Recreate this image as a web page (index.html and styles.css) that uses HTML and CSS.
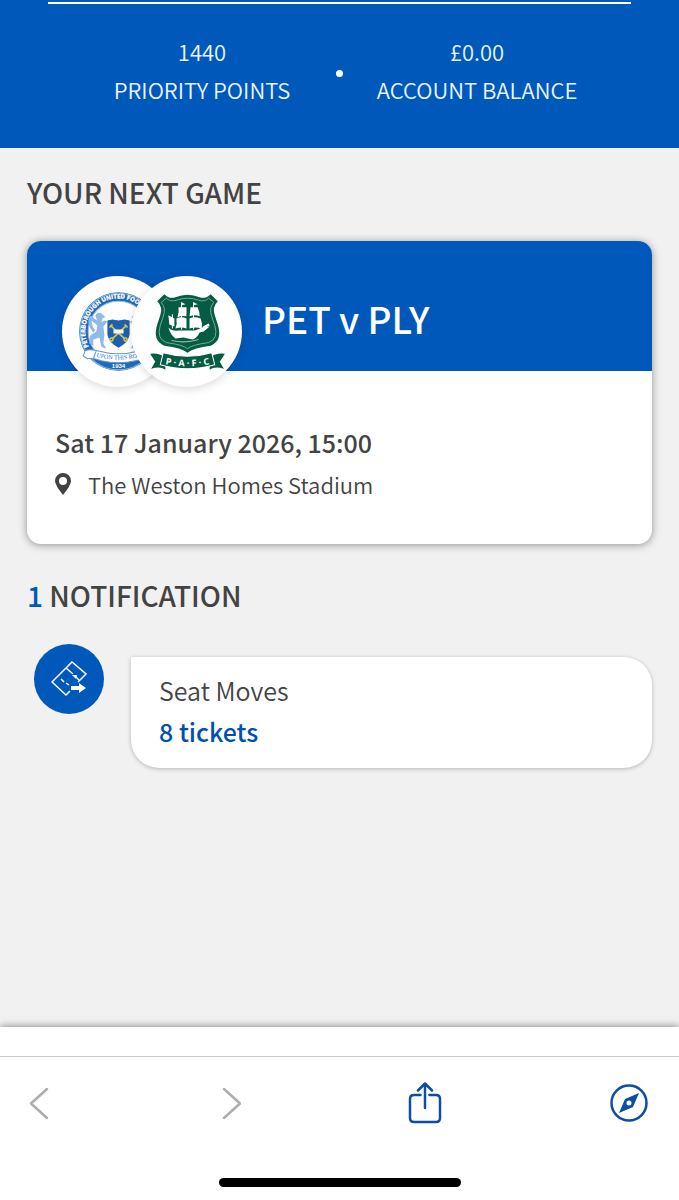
FILE: index.html
```html
<!DOCTYPE html>
<html lang="en">

<head>
<meta charset="UTF-8" />
<meta name="viewport" content="width=device-width, initial-scale=1.0" />
<title>My Account</title>
<link rel="stylesheet" href="styles.css">
</head>

<body>
<header class="account">
<div class="stats">
<div class="stat">
<span>1440</span>
<span>PRIORITY POINTS</span>
</div>
<span class="dot"></span>
<div class="stat">
<span>£0.00</span>
<span>ACCOUNT BALANCE</span>
</div>
</div>
</header>

<main class="content">
<h2 class="title">YOUR NEXT GAME</h2>

<section class="game">
<div class="game-head">
<div class="crests">
<div class="crest">
<svg viewBox="0 0 110 110" role="img" aria-label="Peterborough United">
<defs>
<path id="ring" d="M26.500 70 A33 33 0 1 1 85.500 70" />
</defs>
<circle cx="56" cy="55" r="39" fill="#1f6bb8" />
<circle cx="56" cy="55" r="38" fill="none" stroke="#8fb8e0" stroke-width="1" />
<circle cx="56" cy="55" r="30" fill="#fff" stroke="#9cc3e8" stroke-width="1" />
<text class="ring-text"><textPath href="#ring">PETERBOROUGH UNITED FOOTBALL</textPath></text>
<!-- lions -->
<g fill="#8fbbe6">
<path id="lion" d="M39 37 q-5 -2 -6 3 l2 4 l-5 -3 l-2 2 l7 6 l-1 6 l-6 4 l-1 8 l4 2 l0 -6 l6 -2 l2 9 l5 2 l-3 -5 l1 -9 l-1 -8 l4 -5 l-3 -1 l-3 2 l1 -4 l3 -1z" />
<path d="M31 56 q-7 -8 -4 -15 q2 -3 4 0 q-4 5 2 13z" />
<use href="#lion" transform="translate(112 0) scale(-1 1)" />
</g>
<!-- shield and keys -->
<path d="M45 44 l5 -1 l6 1 l6 -1 l5 1 v14 q-1 8 -11 13 q-10 -5 -11 -13z" fill="#1e5fae" />
<g fill="none" stroke="#d9c64a" stroke-width="1.600">
<path d="M48 49 L62 62 M64 49 L50 62" />
<circle cx="49" cy="63" r="1.500" />
<circle cx="63" cy="63" r="1.500" />
<path d="M47 51 l3 -3 M65 51 l-3 -3" />
</g>
<path d="M51 53 h10 v4 h-10z" fill="#f4f4e6" />
<!-- ribbon -->
<path d="M23 74 q4 -2 12 0 q21 6 42 0 q8 -3 12 0 l-3 8 q-7 1 -13 2 q-17 4 -34 0 q-8 -3 -14 -2 l-4 -3z" fill="#fff" stroke="#5b98d4" stroke-width="1" />
<path d="M34 74 l-3 8 M78 74 l3 8" stroke="#5b98d4" />
<path id="motto" d="M34 80 Q56 86 82 79" fill="none" />
<text class="motto-text"><textPath href="#motto">UPON THIS ROCK</textPath></text>
<text x="56" y="91" class="year-text">1934</text>
</svg>
</div>
<div class="crest">
<svg viewBox="0 0 110 110" role="img" aria-label="Plymouth Argyle">
<path d="M33 18 Q38 23 44 21 Q56 16 68 21 Q74 23 79 18 L86 25 Q80 31 83 39 L86 48 Q91 64 79 69 Q62 71 56 76 Q50 71 33 69 Q21 64 26 48 L29 39 Q32 31 26 25z" fill="#045c43" />
<path d="M35 22 Q39 26 45 24 Q56 20 67 24 Q73 26 77 22 L82 26 Q77 32 80 40 L83 49 Q87 62 77 66 Q61 68 56 72 Q51 68 35 66 Q25 62 29 49 L32 40 Q35 32 30 26z" fill="none" stroke="#8ebcab" stroke-width="0.800" />
<!-- ship -->
<g fill="#fff">
<path d="M37 51 q4 4 10 3 l16 0 q4 -1 7 -3 l8 -1 l-6 5 l-4 1 q-3 6 -7 7 l-9 -2 l-8 1 q-5 -4 -7 -11z" />
<path d="M47 31 l8 0 l0 9 q-5 -1 -9 1 q2 -5 1 -10z" />
<path d="M59 31 l7 0 q2 4 2 9 q-5 -2 -10 0z" />
<path d="M45 42 q5 -2 10 0 l0 10 q-5 -2 -11 0 q2 -5 1 -10z" />
<path d="M58 42 q5 -2 11 0 q2 5 1 10 q-6 -2 -12 0z" />
<path d="M37 39 l6 3 l0 8 l-5 -2z M71 50 l6 -3 l1 2 l-6 3z" />
<path d="M50 26 l4 2 l-4 1z M62 26 l4 2 l-4 1z" />
</g>
<path d="M50 26 V53 M62 26 V53 M41 38 V52" stroke="#fff" fill="none" stroke-width="1" />
<path d="M40 64 q15 3 27 -1" stroke="#8ebcab" fill="none" stroke-width="1" />
<!-- scroll -->
<path d="M19 77 q9 -1 15 4 l0 12 q-5 -4 -14 -1 l4 -7z M93 77 q-9 -1 -15 4 l0 12 q5 -4 14 -1 l-4 -7z" fill="#045c43" />
<path d="M32 76 Q56 83 80 76 L83 88 Q56 96 29 88z" fill="#045c43" stroke="#fff" stroke-width="1" />
<path id="scroll" d="M28 86 Q56 93 84 86" fill="none" />
<text class="scroll-text"><textPath href="#scroll" startOffset="50%">P · A · F · C</textPath></text>
</svg>
</div>
</div>
<h3 class="teams">PET v PLY</h3>
</div>
<div class="game-info">
<p class="date">Sat 17 January 2026, 15:00</p>
<p class="venue">
<svg class="pin" viewBox="0 0 16 22" aria-hidden="true"><path fill-rule="evenodd" d="M8 0 A8 8 0 0 0 0 8 Q0 12 8 22 Q16 12 16 8 A8 8 0 0 0 8 0z M8 4 a4 4 0 1 1 0 8 a4 4 0 1 1 0 -8z" fill="#434343" /></svg>
The Weston Homes Stadium
</p>
</div>
</section>

<h2 class="title"><span class="count">1</span> NOTIFICATION</h2>

<a href="#" class="notice">
<span class="notice-icon">
<svg viewBox="0 0 36 36" fill="none" stroke="#fff" stroke-width="1.500">
<path d="M19 30 L15 34 L1 21 L21 1 L35 13 L27 21" />
<path d="M15 7 L22 13 M24 15 L28 19" />
<path d="M10 18 L13 21 M15 22 L18 24" />
<path d="M21 14 l5 0 l-1 4z" fill="#fff" stroke="none" />
<path d="M20 25 h8 v-3 l7 5 l-7 5 v-3 h-8z" fill="#fff" stroke="none" />
</svg>
</span>
<span class="bubble">
<span>Seat Moves</span>
<strong class="tickets">8 tickets</strong>
</span>
</a>
</main>

<div class="sheet"></div>

<footer class="browser">
<nav class="toolbar">
<button aria-label="Back" disabled><svg width="20" height="42" viewBox="0 0 20 42"><path d="M18 7 L2 21.500 L18 36" /></svg></button>
<button aria-label="Forward" disabled><svg width="24" height="42" viewBox="0 0 24 42"><path d="M7 7 L23 21.500 L7 36" /></svg></button>
<button aria-label="Share"><svg width="34" height="42" viewBox="0 0 34 42"><path d="M12.500 13 H6 Q2 13 2 17 V36 Q2 40 6 40 H28 Q32 40 32 36 V17 Q32 13 28 13 H21.500 M17 26 V2 M10 8.500 L17 1.500 L24 8.500" /></svg></button>
<button aria-label="Open in browser"><svg width="38" height="42" viewBox="0 0 38 42"><circle cx="19" cy="21" r="17.500" /><path class="needle" fill-rule="evenodd" d="M29 11 L23 25 L9 31 L15 17z M19 18.500 a2.500 2.500 0 1 0 0 5 a2.500 2.500 0 1 0 0 -5z" /></svg></button>
</nav>
</footer>
<div class="home"><div class="home-bar"></div></div>
</body>

</html>
```
FILE: styles.css
```css
* {
margin: 0;
padding: 0;
box-sizing: border-box;
}

body {
min-height: 100vh;
display: flex;
flex-direction: column;
background-color: #f1f1f1;
color: #434343;
font-family: "Noto Sans CJK SC", "Noto Sans", sans-serif;
font-size: 22px;
line-height: 38px;
}

.account {
background-color: #0058bb;
color: #e8f6ff;
padding: 2px 48px 40px;
}

.stats {
border-top: 2px solid #fff;
padding: 28px 20px 0;
display: grid;
grid-template-columns: 1fr 7px 1fr;
align-items: center;
}

.stat {
display: flex;
flex-direction: column;
align-items: center;
font-weight: 350;
white-space: nowrap;
}

.dot {
width: 7px;
height: 7px;
margin-top: 6px;
border-radius: 50%;
background-color: #fff;
}

.content {
flex: 1;
padding: 23px 27px;
}

.title {
font-size: 28px;
font-weight: 500;
line-height: 42px;
}

.count {
color: #0058bb;
}

.game {
margin: 28px 0 30px;
background-color: #fff;
border-radius: 14px;
box-shadow: 0 1px 8px rgba(0, 0, 0, 0.4);
}

.game-head {
display: flex;
align-items: center;
gap: 20px;
height: 130px;
padding: 0 35px;
background-color: #0058bb;
border-radius: 14px 14px 0 0;
}

.crests {
display: flex;
align-self: flex-end;
margin-bottom: -16px;
}

.crest {
width: 111px;
height: 111px;
border-radius: 50%;
background-color: #fff;
box-shadow: 0 2px 10px rgba(0, 0, 0, 0.15);
}

.crest + .crest {
margin-left: -42px;
}

.crest svg {
display: block;
}

.ring-text {
fill: #fff;
stroke: #fff;
stroke-width: 0.3px;
font: bold 6px "Open Sans", sans-serif;
}

.motto-text {
fill: #2a6fbc;
font: 6px "Liberation Serif", serif;
}

.year-text {
fill: #fff;
font: bold 6px "Liberation Sans", sans-serif;
text-anchor: middle;
}

.scroll-text {
fill: #fff;
font: bold 9px "Open Sans", sans-serif;
text-anchor: middle;
}

.teams {
padding-top: 24px;
color: #fff;
font-size: 37px;
font-weight: 500;
line-height: 56px;
}

.game-info {
padding: 50px 28px 39px;
}

.date {
font-size: 25px;
font-weight: 500;
line-height: 42px;
}

.venue {
display: flex;
align-items: center;
gap: 17px;
font-weight: 350;
line-height: 42px;
}

.pin {
width: 16px;
height: 22px;
}

.notice {
display: flex;
align-items: flex-start;
gap: 27px;
margin-top: 28px;
padding-left: 7px;
color: inherit;
text-decoration: none;
}

.notice-icon {
width: 70px;
height: 70px;
border-radius: 50%;
background-color: #0058bb;
display: flex;
align-items: center;
justify-content: center;
}

.notice-icon svg {
width: 36px;
height: 36px;
}

.bubble {
flex: 1;
display: flex;
flex-direction: column;
margin-top: 13px;
padding: 13px 28px 16px;
border-radius: 2px 28px 28px 28px;
background-color: #fff;
box-shadow: 0 1px 4px rgba(0, 0, 0, 0.25);
font-size: 25px;
font-weight: 350;
line-height: 41px;
}

.tickets {
color: #0050b0;
font-weight: 500;
}

.sheet {
height: 29px;
background-color: #fff;
box-shadow: 0 0 8px rgba(0, 0, 0, 0.5);
}

/* sits over the shadow of the sheet above it */
.browser {
position: relative;
background-color: #fff;
border-top: 1px solid #c8c8c8;
padding: 25px 31px 0 29px;
}

.toolbar {
display: flex;
justify-content: space-between;
}

.toolbar button {
border: 0;
background: none;
cursor: pointer;
}

.toolbar svg {
display: block;
fill: none;
stroke: #0a4ea6;
stroke-width: 2.500px;
stroke-linecap: round;
stroke-linejoin: round;
}

.toolbar button:disabled svg {
stroke: #adadad;
}

.toolbar .needle {
fill: #0a4ea6;
stroke: none;
}

.home {
background-color: #fff;
padding: 54px 0 13px;
}

.home-bar {
width: 242px;
height: 9px;
margin: 0 auto;
border-radius: 5px;
background-color: #000;
}
```
